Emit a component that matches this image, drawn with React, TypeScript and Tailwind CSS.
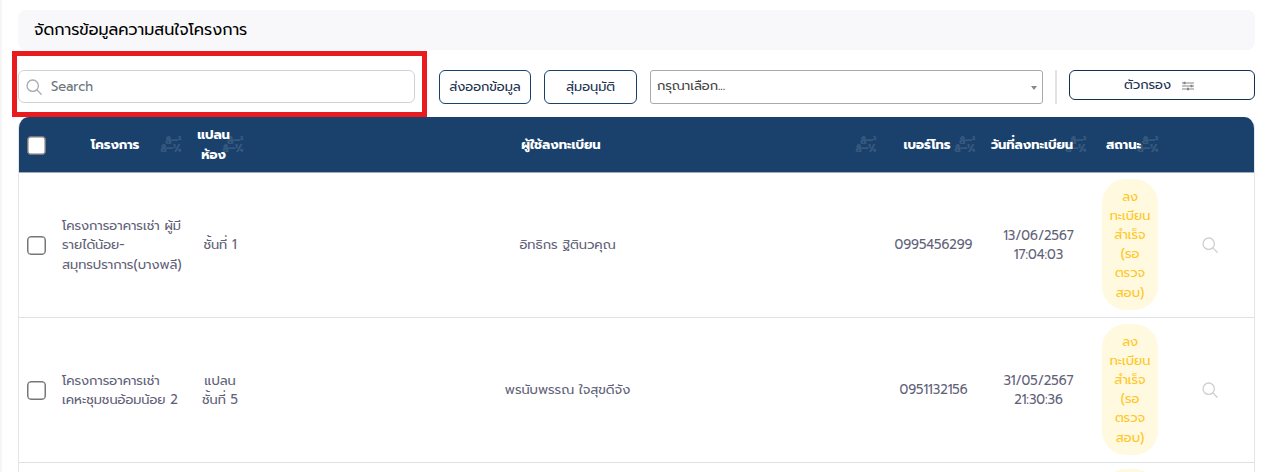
import React from "react";

type Line = { text: string };

const columns = "grid grid-cols-[35px_135px_62px_633px_99px_111px_72px_88px] items-center";

function SearchIcon({ className }: { className: string }) {
  return (
    <svg className={className} viewBox="0 0 16 16" fill="none" stroke="currentColor" strokeWidth="1.3">
      <circle cx="6.7" cy="6.7" r="5.7" />
      <path d="M10.9 10.9 15.2 15.2" strokeLinecap="round" />
    </svg>
  );
}

function Lines({ lines, className = "" }: { lines: Line[]; className?: string }) {
  return (
    <div className={className}>
      {lines.map((line, i) => (
        <div key={i} className="whitespace-nowrap">
          {line.text}
        </div>
      ))}
    </div>
  );
}

function HeadCell({ lines }: { lines: Line[] }) {
  return (
    <div className="relative flex h-full items-center justify-center pr-[13px]">
      <Lines lines={lines} className="flex flex-col items-center text-[13px] leading-5 font-bold tracking-[-0.05px] text-white" />
      <div className="absolute top-[20px] right-[8px] text-right text-[11px] leading-[8px] font-bold tracking-[-0.5px] text-white/15">
        <div>â–²</div>
        <div>â–¼</div>
      </div>
    </div>
  );
}

const heads: Line[][] = [
  [{ text: "โครงการ" }],
  [{ text: "แปลน" }, { text: "ห้อง" }],
  [{ text: "ผู้ใช้ลงทะเบียน" }],
  [{ text: "เบอร์โทร" }],
  [{ text: "วันที่ลงทะเบียน" }],
  [{ text: "สถานะ" }],
];

const statusLines: Line[] = [
  { text: "ลง" },
  { text: "ทะเบียน" },
  { text: "สำเร็จ" },
  { text: "(รอ" },
  { text: "ตรวจ" },
  { text: "สอบ)" },
];

const rows = [
  {
    project: [{ text: "โครงการอาคารเช่า ผู้มี" }, { text: "รายได้น้อย-" }, { text: "สมุทรปราการ(บางพลี)" }],
    plan: [{ text: "ชั้นที่ 1" }],
    name: [{ text: "อิทธิกร ฐิตินวคุณ" }],
    phone: [{ text: "0995456299" }],
    date: [{ text: "13/06/2567" }, { text: "17:04:03" }],
  },
  {
    project: [{ text: "โครงการอาคารเช่า" }, { text: "เคหะชุมชนอ้อมน้อย 2" }],
    plan: [{ text: "แปลน" }, { text: "ชั้นที่ 5" }],
    name: [{ text: "พรนับพรรณ ใจสุขดีจัง" }],
    phone: [{ text: "0951132156" }],
    date: [{ text: "31/05/2567" }, { text: "21:30:36" }],
  },
];

function Checkbox() {
  return (
    <div className="mt-px ml-[8px] h-[19px] w-[19px] rounded-[4px] border border-[#767676] bg-white shadow-[inset_0_0_0_0.5px_#767676]" />
  );
}

function Badge() {
  return (
    <div className="mx-auto mb-[2px] h-[131px] w-[56px] rounded-[24px] bg-[#fff9e0] pt-[8px]">
      <Lines
        lines={statusLines}
        className="flex flex-col items-center text-[13px] leading-[19.2px] tracking-[-0.1px] text-[#ffc61f]"
      />
    </div>
  );
}

export default function App() {
  return (
    <div className="h-[472px] w-[1267px] overflow-hidden border-l-2 border-[#f5f5f6] bg-white pt-[10px] pl-4 font-['Prompt','Noto_Sans_Thai','Noto_Sans',sans-serif]">
      <div className="flex h-10 w-[1237px] items-center rounded-lg bg-[#f8f8fa] pl-4 text-[16px] text-black">
        จัดการข้อมูลความสนใจโครงการ
      </div>

      <div className="relative mt-5 flex h-[47px] w-[1237px] items-start text-[13px] tracking-[-0.05px]">
        <div className="absolute top-[-19px] left-[-6px] z-10 h-[66px] w-[415px] border-[5px] border-[#e81c1f]" />
        <div className="flex h-[33px] w-[397px] items-center rounded-md border border-[#ced4da] pl-[7px] tracking-[-0.1px] text-[#6c757d]">
          <SearchIcon className="mr-[9px] h-4 w-4 text-[#a7a8b0]" />
          Search
        </div>
        <button className="ml-6 h-[34px] w-[92px] rounded-md border border-[#19416c] whitespace-nowrap text-[#19304f]">
          ส่งออกข้อมูล
        </button>
        <button className="ml-[13px] h-[34px] w-[93px] rounded-md border border-[#19416c] whitespace-nowrap text-[#19304f]">
          สุ่มอนุมัติ
        </button>
        <div className="ml-[13px] flex h-[34px] w-[393px] items-center justify-between rounded-[3px] border border-[#aaa] pr-[5px] pl-[6px] text-[#444]">
          <span className="-mt-[2px]">กรุณาเลือก...</span>
          <span className="mt-[2px] border-x-[3px] border-t-4 border-x-transparent border-t-[#888]" />
        </div>
        <div className="ml-3 h-[34px] w-[2px] bg-[#e3e3e3]" />
        <button className="ml-3 flex h-[30px] w-[186px] items-center justify-center rounded-md border border-[#132f52] pr-[6px] text-[#19304f]">
          ตัวกรอง
          <svg className="mt-[2px] ml-[11px] h-[10px] w-3" viewBox="0 0 12 10" fill="none" stroke="#858585">
            <path d="M0 2h12M0 5h12M0 8h12" strokeWidth="1.2" />
            <path d="M2.5 .8v2.4M9.5 3.8v2.4M6 6.8v2.4" strokeWidth="2" />
          </svg>
        </button>
      </div>

      <div className="w-[1237px] overflow-hidden rounded-t-[11px] border-x border-[#e3e5e8]">
        <div className={`${columns} h-14 border-b border-[#a5abb2] bg-[#19416c]`}>
          <Checkbox />
          {heads.map((lines, i) => (
            <HeadCell key={i} lines={lines} />
          ))}
        </div>
        {rows.map((row, i) => (
          <div
            key={i}
            className={`${columns} h-[145px] border-b border-[#dee2e6] text-[13px] leading-[19.2px] tracking-[-0.05px] text-[#5f6178]`}
          >
            <Checkbox />
            <Lines lines={row.project} className="pl-2" />
            <Lines lines={row.plan} className="flex flex-col items-center" />
            <Lines lines={row.name} className="flex flex-col items-center" />
            <Lines lines={row.phone} className="flex flex-col items-center" />
            <Lines lines={row.date} className="flex flex-col items-center" />
            <Badge />
            <SearchIcon className="mx-auto h-4 w-4 text-[#cfcfcf]" />
          </div>
        ))}
        <div className={`${columns} h-[145px]`}>
          <div className="col-start-7">
            <Badge />
          </div>
        </div>
      </div>
    </div>
  );
}
